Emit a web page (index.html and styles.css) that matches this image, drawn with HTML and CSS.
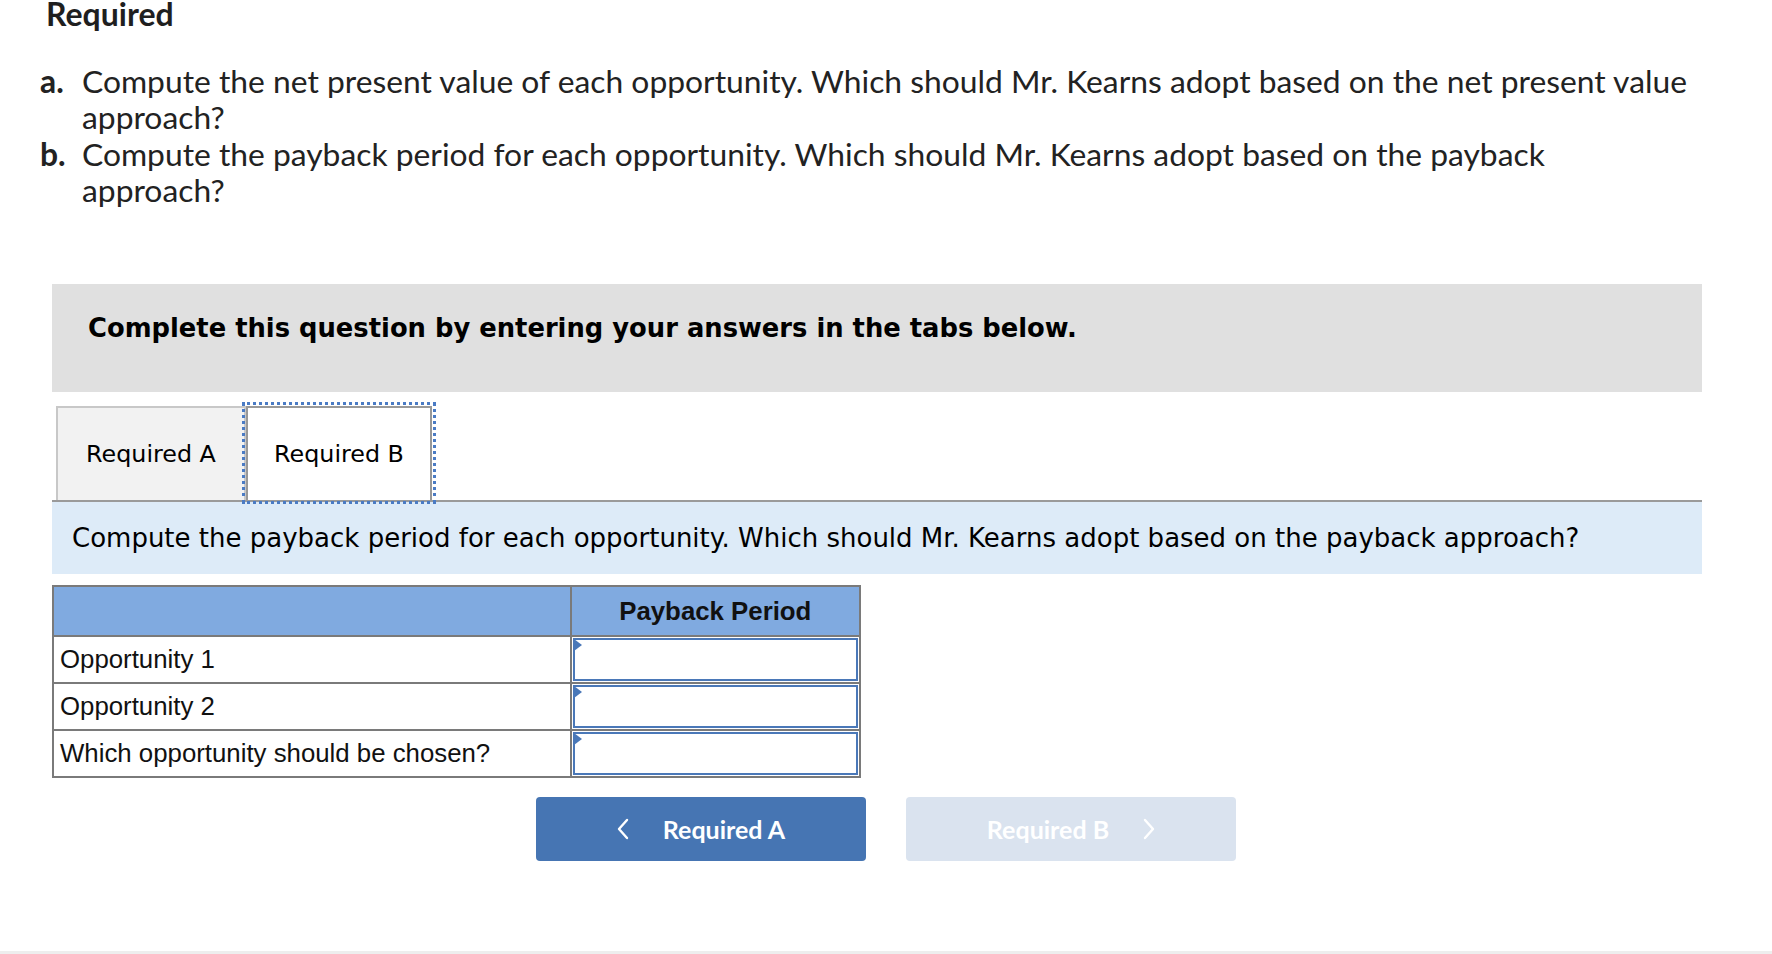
FILE: index.html
```html
<!DOCTYPE html>
<html>
<head>
<meta charset="utf-8">
<link rel="stylesheet" href="styles.css">
</head>
<body>
<div class="page">
  <h1 class="title">Required</h1>
  <ol class="reqs">
    <li class="req"><span class="req-label">a.</span><span class="req-text">Compute the net present value of each opportunity. Which should Mr. Kearns adopt based on the net present value<br>approach?</span></li>
    <li class="req"><span class="req-label">b.</span><span class="req-text">Compute the payback period for each opportunity. Which should Mr. Kearns adopt based on the payback<br>approach?</span></li>
  </ol>

  <div class="instructions">Complete this question by entering your answers in the tabs below.</div>

  <div class="tabs">
    <div class="tab">Required A</div>
    <div class="tab tab-active">Required B</div>
  </div>
  <div class="prompt">Compute the payback period for each opportunity. Which should Mr. Kearns adopt based on the payback approach?</div>

  <table class="grid">
    <tr class="head">
      <th class="c1"></th>
      <th class="c2">Payback Period</th>
    </tr>
    <tr>
      <td class="c1">Opportunity 1</td>
      <td class="c2"><div class="inp"><span class="tri"></span></div></td>
    </tr>
    <tr>
      <td class="c1">Opportunity 2</td>
      <td class="c2"><div class="inp"><span class="tri"></span></div></td>
    </tr>
    <tr>
      <td class="c1">Which opportunity should be chosen?</td>
      <td class="c2"><div class="inp"><span class="tri"></span></div></td>
    </tr>
  </table>

  <div class="nav">
    <div class="btn btn-prev">
      <svg class="chev" width="12" height="22" viewBox="0 0 12 22"><path d="M10 2 L2 11 L10 20" fill="none" stroke="#fff" stroke-width="2.4" stroke-linecap="round" stroke-linejoin="round"/></svg>
      <span>Required A</span>
    </div>
    <div class="btn btn-next">
      <span>Required B</span>
      <svg class="chev" width="12" height="22" viewBox="0 0 12 22"><path d="M2 2 L10 11 L2 20" fill="none" stroke="#fff" stroke-width="2.4" stroke-linecap="round" stroke-linejoin="round"/></svg>
    </div>
  </div>
</div>
</body>
</html>
```

FILE: styles.css
```css
html, body {
  margin: 0;
  padding: 0;
  background: #ffffff;
}
body {
  height: 954px;
  box-sizing: border-box;
  border-bottom: 3px solid #eeeeee;
  overflow: hidden;
}
.page {
  position: relative;
}
.title {
  margin: 0 0 0 46px;
  font-family: Lato, "Liberation Sans", sans-serif;
  font-weight: 700;
  font-size: 32px;
  line-height: 28px;
  color: #1f1f1f;
}
.reqs {
  list-style: none;
  margin: 35px 0 0 0;
  padding: 0 0 0 40px;
  font-family: Lato, "Liberation Sans", sans-serif;
  font-size: 31.8px;
  line-height: 36.3px;
  color: #222222;
}
.req {
  display: flex;
}
.req-label {
  flex: 0 0 42px;
  font-weight: 700;
}
.req-text {
  flex: 1;
  white-space: nowrap;
}
.instructions {
  margin: 76px 0 0 52px;
  width: 1650px;
  height: 108px;
  box-sizing: border-box;
  padding: 30px 0 0 36px;
  background: #e0e0e0;
  font-family: "DejaVu Sans", Verdana, sans-serif;
  font-weight: 700;
  font-size: 25.8px;
  line-height: 28px;
  color: #000000;
}
.tabs {
  margin: 14px 0 0 52px;
  width: 1650px;
  box-sizing: border-box;
  padding-left: 4px;
  display: flex;
  align-items: flex-end;
  border-bottom: 2px solid #9a9a9a;
}
.tab {
  width: 190px;
  height: 94px;
  box-sizing: border-box;
  border: 2px solid #c8c8c8;
  border-bottom: none;
  background: #f2f2f2;
  display: flex;
  align-items: center;
  justify-content: center;
  font-family: "DejaVu Sans", Verdana, sans-serif;
  font-size: 23.8px;
  color: #000000;
}
.tab-active {
  width: 186px;
  border: 2px solid #999999;
  border-bottom: none;
  background: #ffffff;
  outline: 3px dotted #4a7bc4;
  outline-offset: 1px;
}
.prompt {
  margin: 0 0 0 52px;
  width: 1650px;
  height: 72px;
  box-sizing: border-box;
  padding-left: 20px;
  display: flex;
  align-items: center;
  background: #ddebf8;
  font-family: "DejaVu Sans", Verdana, sans-serif;
  font-size: 26px;
  color: #000000;
}
.grid {
  margin: 11px 0 0 52px;
  width: 809px;
  border-collapse: collapse;
  border: 2px solid #7a7a7a;
  font-family: "Liberation Sans", Arial, sans-serif;
  font-size: 25.8px;
  color: #111111;
}
.grid th, .grid td {
  border: 2px solid #7a7a7a;
  padding: 0;
  height: 44px;
}
.grid .head th {
  height: 48px;
  background: #80aae0;
  font-weight: 700;
  text-align: center;
}
.grid .c1 {
  width: 515px;
  padding-left: 6px;
  text-align: left;
}
.grid .c2 {
  width: 290px;
}
.inp {
  position: relative;
  height: 39px;
  margin: 1px;
  border: 2px solid #4a78b8;
  background: #ffffff;
}
.tri {
  position: absolute;
  left: -1px;
  top: -1px;
  width: 0;
  height: 0;
  border-top: 6px solid transparent;
  border-bottom: 6px solid transparent;
  border-left: 8px solid #4a78b8;
}
.nav {
  margin-top: 19px;
  display: flex;
  justify-content: center;
  gap: 40px;
}
.btn {
  width: 330px;
  height: 64px;
  border-radius: 4px;
  display: flex;
  align-items: center;
  justify-content: center;
  gap: 34px;
  font-family: Lato, "Liberation Sans", sans-serif;
  font-weight: 700;
  font-size: 25px;
  color: #ffffff;
}
.btn-prev {
  background: #4675b3;
}
.btn-next {
  background: #dae3ef;
}
.chev {
  display: block;
}
```
